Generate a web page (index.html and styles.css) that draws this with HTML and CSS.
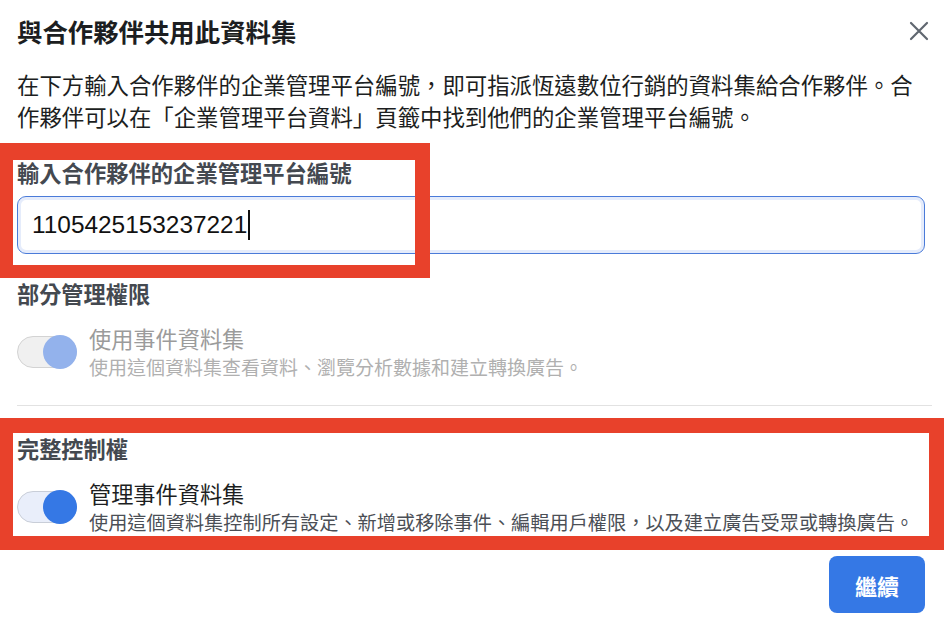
FILE: index.html
```html
<!DOCTYPE html>
<html>
<head>
    <title>與合作夥伴共用此資料集</title>
    <link rel="stylesheet" href="styles.css">
</head>
<body>
    <div class="dialog">
        <div class="dialog-header">
            <h1>與合作夥伴共用此資料集</h1>
            <button class="close" aria-label="關閉">
                <svg width="22" height="22" viewBox="0 0 22 22"><path d="M3 3L19 19M19 3L3 19" stroke="#606770" stroke-width="2.2" stroke-linecap="round"/></svg>
            </button>
        </div>
        <p class="intro">在下方輸入合作夥伴的企業管理平台編號，即可指派恆遠數位行銷的資料集給合作夥伴。合作夥伴可以在「企業管理平台資料」頁籤中找到他們的企業管理平台編號。</p>

        <label class="field-label">輸入合作夥伴的企業管理平台編號</label>
        <div class="field-input"><span>1105425153237221</span><span class="caret"></span></div>

        <div class="section-label partial">部分管理權限</div>
        <div class="perm disabled">
            <div class="toggle"><span class="knob"></span></div>
            <div class="perm-text">
                <div class="perm-title">使用事件資料集</div>
                <div class="perm-desc">使用這個資料集查看資料、瀏覽分析數據和建立轉換廣告。</div>
            </div>
        </div>

        <hr class="divider">

        <div class="section-label">完整控制權</div>
        <div class="perm">
            <div class="toggle on"><span class="knob"></span></div>
            <div class="perm-text">
                <div class="perm-title">管理事件資料集</div>
                <div class="perm-desc">使用這個資料集控制所有設定、新增或移除事件、編輯用戶權限，以及建立廣告受眾或轉換廣告。</div>
            </div>
        </div>

        <div class="footer">
            <button class="primary">繼續</button>
        </div>

        <!-- annotation boxes -->
        <div class="mark mark-id"></div>
        <div class="mark mark-full"></div>
    </div>
</body>
</html>
```

FILE: styles.css
```css
body { margin: 0; background: #fff; font-family: "Noto Sans CJK TC", "Noto Sans CJK SC", sans-serif; color: #1c1e21; }
.dialog { position: relative; width: 950px; height: 626px; box-sizing: border-box; padding: 0 25px 0 17px; overflow: hidden; }
.dialog-header { display: flex; justify-content: space-between; align-items: center; height: 62px; }
h1 { margin: 0; font-size: 25.4px; font-weight: bold; line-height: 30px; color: #1c1e21; }
.close { background: none; border: none; padding: 0; margin-right: -5px; width: 22px; height: 22px; cursor: pointer; display: flex; }
.intro { margin: 6px 0 0; font-size: 22.4px; line-height: 32px; color: #1c1e21; }
.field-label { display: block; margin-top: 25px; font-size: 22.3px; font-weight: bold; line-height: 30px; color: #444950; }
.field-input { display: flex; align-items: center; margin-top: 9px; height: 58px; box-sizing: border-box; padding: 0 14px; border: 1px solid #4a7bd9; border-radius: 9px; box-shadow: inset 0 0 0 3px #e5ecfb; font-family: "Liberation Sans", sans-serif; font-size: 24.4px; color: #111; }
.caret { display: inline-block; width: 2px; height: 30px; margin-left: 1px; background: #111; }
.section-label { margin-top: 27px; font-size: 22.2px; font-weight: bold; line-height: 30px; color: #444950; }
.section-label.partial { margin-top: 24px; }
.perm { display: flex; align-items: center; gap: 12px; margin-top: 16px; }
.toggle { position: relative; width: 60px; height: 32px; box-sizing: border-box; border-radius: 16px; border: 1px solid #c9ced8; background: #e9eefa; flex-shrink: 0; }
.knob { position: absolute; right: -1px; top: -2px; width: 34px; height: 34px; border-radius: 50%; background: #3578e5; }
.perm.disabled .toggle { background: #f0f0f0; border-color: #d3d3d3; }
.perm.disabled .knob { background: #93b2ec; }
.perm-title { font-size: 22.2px; line-height: 28px; color: #1c1e21; }
.perm-desc { margin-top: 2px; font-size: 19.2px; line-height: 26px; color: #4b4f56; white-space: nowrap; }
.perm.disabled .perm-title { color: #9b9b9b; }
.perm.disabled .perm-desc { color: #b0b0b0; font-size: 19px; }
.divider { margin: 25px -7px 0 0; border: none; border-top: 1px solid #e2e2e2; }
.footer { display: flex; justify-content: flex-end; margin-top: 21px; }
.primary { width: 96px; height: 57px; border: none; border-radius: 8px; background: #3578e5; color: #fff; font-family: inherit; font-size: 22px; font-weight: bold; cursor: pointer; }
.mark { position: absolute; left: 0; border-style: solid; border-color: #e8412b; box-sizing: border-box; pointer-events: none; }
.mark-id { top: 143px; width: 430px; height: 135px; border-width: 17px 15px 13px 13px; }
.mark-full { top: 418px; width: 944px; height: 132px; border-width: 15px 15px 14px 13px; }
```
